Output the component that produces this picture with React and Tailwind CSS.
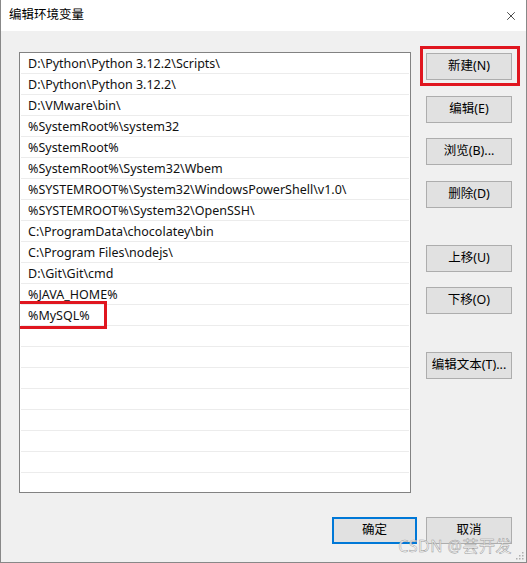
import { X } from 'lucide-react'

const paths = [
  'D:\\Python\\Python 3.12.2\\Scripts\\',
  'D:\\Python\\Python 3.12.2\\',
  'D:\\VMware\\bin\\',
  '%SystemRoot%\\system32',
  '%SystemRoot%',
  '%SystemRoot%\\System32\\Wbem',
  '%SYSTEMROOT%\\System32\\WindowsPowerShell\\v1.0\\',
  '%SYSTEMROOT%\\System32\\OpenSSH\\',
  'C:\\ProgramData\\chocolatey\\bin',
  'C:\\Program Files\\nodejs\\',
  'D:\\Git\\Git\\cmd',
  '%JAVA_HOME%',
  '%MySQL%',
]

const rows = [...paths, ...Array(8).fill('')]

function WinButton({ children, className = '' }) {
  return (
    <button
      className={`w-[86px] h-[27px] bg-[#e1e1e1] border border-[#adadad] text-[12.5px] text-black flex items-center justify-center ${className}`}
    >
      {children}
    </button>
  )
}

export default function App() {
  return (
    <div
      className="w-[527px] h-[563px] bg-[#f0f0f0] border-x border-b border-[#888888] flex flex-col relative overflow-hidden"
      style={{ fontFamily: '"Noto Sans", "Noto Sans CJK SC", sans-serif' }}
    >
      {/* title bar */}
      <div className="h-[31px] bg-white flex items-center justify-between pl-[8px] pr-[8px] shrink-0">
        <span className="text-[12.5px] text-black">编辑环境变量</span>
        <X size={14} strokeWidth={1.2} className="text-black" />
      </div>

      <div className="flex pt-[21px] pl-[18px]">
        {/* path list */}
        <div className="w-[392px] h-[441px] bg-white border border-[#828282] overflow-hidden">
          {rows.map((p, i) => (
            <div
              key={i}
              className="relative h-[21px] border-b border-[#ececec] mx-[1px] flex items-center pt-[2px] pl-[7px] text-[12.5px] text-[#111] whitespace-nowrap"
            >
              {p}
              {p === '%MySQL%' && (
                <div className="absolute -left-[7px] -top-[4px] w-[93px] h-[28px] border-[3px] border-[#e0161f]" />
              )}
            </div>
          ))}
        </div>

        {/* side buttons */}
        <div className="flex flex-col ml-[15px] pt-[1px]">
          <div className="relative">
            <WinButton>新建(N)</WinButton>
            <div className="absolute -left-[6px] -top-[7px] w-[100px] h-[40px] border-[3px] border-[#e0161f]" />
          </div>
          <WinButton className="mt-[16px]">编辑(E)</WinButton>
          <WinButton className="mt-[15px]">浏览(B)...</WinButton>
          <WinButton className="mt-[16px]">删除(D)</WinButton>
          <WinButton className="mt-[37px]">上移(U)</WinButton>
          <WinButton className="mt-[15px]">下移(O)</WinButton>
          <WinButton className="mt-[38px]">编辑文本(T)...</WinButton>
        </div>
      </div>

      {/* bottom buttons */}
      <div className="flex justify-end gap-[9px] pr-[14px] mt-[24px]">
        <button className="w-[85px] h-[27px] bg-[#e1e1e1] border-2 border-[#0078d7] text-[12.5px] text-black flex items-center justify-center">
          确定
        </button>
        <WinButton>取消</WinButton>
      </div>

      {/* watermark */}
      <div className="absolute right-[14px] bottom-[4px] text-[16px] text-white/85 [-webkit-text-stroke:0.5px_#9a9a9a] tracking-[0.5px]">
        CSDN @芸开发
      </div>

      {/* resize grip */}
      <svg className="absolute right-[2px] bottom-[2px]" width="9" height="9" viewBox="0 0 9 9">
        <rect x="7" y="1" width="1.5" height="1.5" fill="#b0b0b0" />
        <rect x="4" y="4" width="1.5" height="1.5" fill="#b0b0b0" />
        <rect x="7" y="4" width="1.5" height="1.5" fill="#b0b0b0" />
        <rect x="1" y="7" width="1.5" height="1.5" fill="#b0b0b0" />
        <rect x="4" y="7" width="1.5" height="1.5" fill="#b0b0b0" />
        <rect x="7" y="7" width="1.5" height="1.5" fill="#b0b0b0" />
      </svg>
    </div>
  )
}
